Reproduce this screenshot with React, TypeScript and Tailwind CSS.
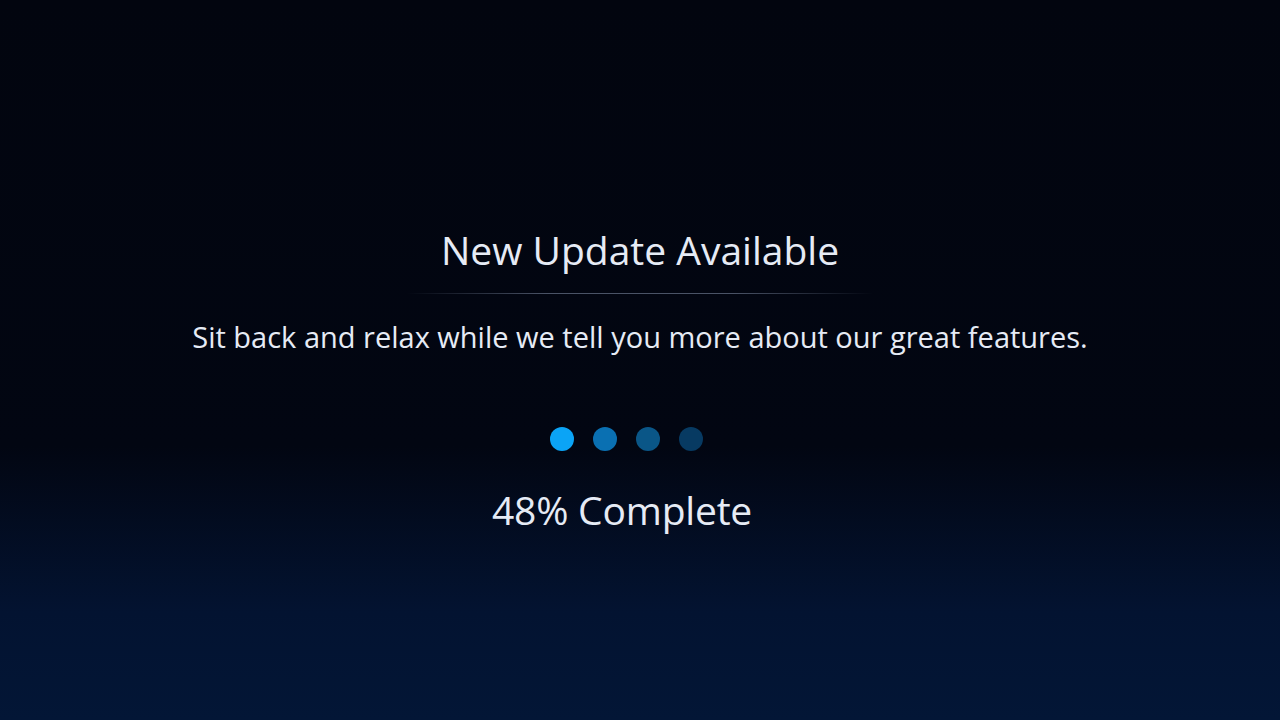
export default function App() {
  const dots = ["bg-[#0ba4f6]", "bg-[#0a70b2]", "bg-[#0a5687]", "bg-[#073a62]"];

  return (
    <div className="flex h-[720px] w-[1280px] flex-col items-center bg-[linear-gradient(to_bottom,#02050f_0%,#020612_62%,#031331_85%,#031636_100%)] pt-[226px] font-['Open_Sans',sans-serif] text-[#e6ebf5]">
      <h1 className="text-[39px] leading-[48px]">New Update Available</h1>
      <div className="mt-[19px] h-px w-[466px] bg-[linear-gradient(to_right,transparent,#4a5366_30%,#4a5366_70%,transparent)]" />
      <p className="mt-[23px] text-[29px] leading-[40px]">
        Sit back and relax while we tell you more about our great features.
      </p>
      <div className="mt-[70px] mr-[28px] flex gap-[19px]">
        {dots.map((c, i) => (
          <span key={i} className={`h-[24px] w-[24px] rounded-full ${c}`} />
        ))}
      </div>
      <div className="mt-[35px] mr-[36px] text-[39px] leading-[48px] tracking-[-0.2px]">48% Complete</div>
    </div>
  );
}
